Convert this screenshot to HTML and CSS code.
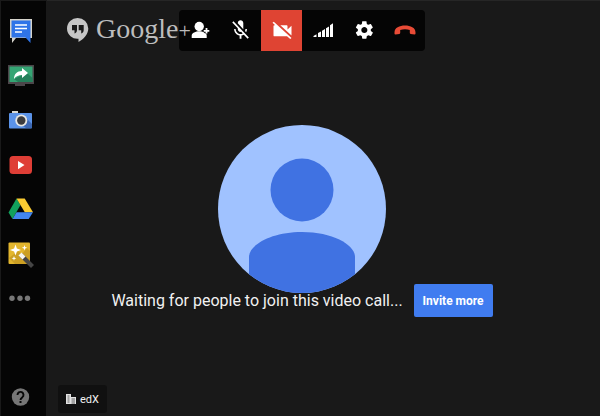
FILE: index.html
```html
<!DOCTYPE html>
<html lang="en">
<head>
<meta charset="utf-8">
<title>Google+ Hangouts</title>
<link rel="stylesheet" href="styles.css">
</head>
<body>
<nav class="sidebar" aria-label="Apps">
  <button class="app" aria-label="Chat"><svg viewBox="0 0 30 30">
    <path d="M4 4h22v19H10l-4 5v-5H4z" fill="#d5d3cb"/>
    <path d="M5.500 5.500h19V28l-5-5.500h-14z" fill="#2f74e8"/>
    <path d="M9 10h12M9 13.500h12M9 17h7" stroke="#fff" stroke-width="1.700"/>
  </svg></button>
  <button class="app" aria-label="Screenshare"><svg viewBox="0 0 30 30">
    <path d="M2 5h26v19h-9v2H9v-2H2z" fill="#4b4549"/>
    <path d="M3.500 6.500h23v15.500h-23z" fill="#35a574"/>
    <path d="M21 13l5.500 5v4H12l-4-3z" fill="#24805a"/>
    <path d="M8 19c0-5 3-8 8-8V8l6 5-6 5v-3c-3 0-6 1-8 4z" fill="#fff"/>
  </svg></button>
  <button class="app" aria-label="Capture"><svg viewBox="0 0 30 30">
    <rect x="6" y="6" width="6" height="3" fill="#d8d8d2"/>
    <rect x="3" y="8" width="23" height="15.500" rx="1" fill="#5b93e8"/>
    <path d="M19 12l7 7v4h-6l-7-5z" fill="#3c68b4"/>
    <circle cx="15.300" cy="15.500" r="6" fill="#e6e6e2"/>
    <circle cx="15.300" cy="15.500" r="4.200" fill="#3b3b3d"/>
  </svg></button>
  <button class="app" aria-label="YouTube"><svg viewBox="0 0 30 30">
    <rect x="3.500" y="6" width="22.500" height="18" rx="3.500" fill="#df3e36"/>
    <path d="M12 11l6.500 4-6.500 4.200z" fill="#fff"/>
  </svg></button>
  <button class="app" aria-label="Google Drive"><svg viewBox="0 0 30 30">
    <path d="M10.500 3.500L2.500 17.500 6.500 24l8-14z" fill="#12a05c"/>
    <path d="M10.500 3.500h8.200L27 17.300h-8.200z" fill="#fbcb32"/>
    <path d="M10.500 17.300H27L22.700 24H6.500z" fill="#4285ee"/>
  </svg></button>
  <button class="app" aria-label="Effects"><svg viewBox="0 0 30 30">
    <rect x="2.500" y="2.500" width="21.500" height="21.500" rx="1" fill="#e3b62e"/>
    <path d="M3 18l9-7 4 3 5-6 3 3v13H9z" fill="#b98c1c" opacity=".55"/>
    <path d="M9.500 4.500l1.400 4.100L15 10l-4.100 1.400-1.400 4.100-1.400-4.100L4 10l4.100-1.400zM18.500 5l.7 2 2 .7-2 .7-.7 2-.7-2-2-.7 2-.7zM8 16l.6 1.700 1.800.6-1.800.7L8 20.700 7.400 19l-1.800-.7 1.800-.6z" fill="#fff"/>
    <path d="M14.500 14.500L26.500 26.500" stroke="#454545" stroke-width="4.200"/>
    <path d="M14 14l4 4" stroke="#f7f5ee" stroke-width="4.200"/>
  </svg></button>
  <button class="app" aria-label="More apps"><svg viewBox="0 0 30 30" fill="#777">
    <circle cx="6" cy="13.300" r="2.700"/><circle cx="14" cy="13.300" r="2.700"/><circle cx="21.500" cy="13.300" r="2.700"/>
  </svg></button>
  <button class="app help" aria-label="Help"><svg viewBox="0 0 30 30">
    <circle cx="14.500" cy="15" r="8.700" fill="#767676"/>
    <path d="M11.500 13a3 3 0 1 1 4.800 2.300c-1.200.9-1.800 1.300-1.800 2.600" fill="none" stroke="#080808" stroke-width="1.900"/>
    <rect x="13.500" y="19" width="2" height="2" fill="#080808"/>
  </svg></button>
</nav>
<main class="stage">
  <header class="topbar">
    <div class="toolbar">
      <button class="tool" aria-label="Invite people"><svg viewBox="0 0 41 41" fill="#fff">
        <circle cx="20.200" cy="16.500" r="4.700"/>
        <path d="M12.700 28v-2.500c0-2.700 4-4.300 7.500-4.300s7.500 1.600 7.500 4.300V28z"/>
        <path d="M27.500 18.300v5M25 20.800h5" stroke="#050505" stroke-width="3.600"/>
        <path d="M27.500 18v5.600M24.700 20.800h5.600" stroke="#fff" stroke-width="1.800"/>
      </svg></button>
      <button class="tool" aria-label="Unmute microphone"><svg viewBox="0 0 41 41" fill="#fff">
        <path transform="translate(9.500 8.200) scale(.92 .98)" d="M19 11h-1.700c0 .74-.16 1.430-.43 2.050l1.230 1.230c.56-.98.9-2.090.9-3.280zm-4.020.17c0-.06.02-.11.02-.17V5c0-1.660-1.340-3-3-3S9 3.340 9 5v.18l5.980 5.990zM4.270 3L3 4.270l6.010 6.010V11c0 1.660 1.330 3 2.990 3 .22 0 .44-.03.65-.08l1.660 1.660c-.71.33-1.500.52-2.310.52-2.760 0-5.300-2.100-5.300-5.100H5c0 3.410 2.720 6.230 6 6.720V21h2v-3.280c.91-.13 1.770-.45 2.540-.9L19.730 21 21 19.730 4.270 3z"/>
      </svg></button>
      <button class="tool tool-off" aria-label="Turn camera on"><svg viewBox="0 0 41 41" fill="#fff">
        <path transform="translate(9.500 9.800) scale(1 .92)" d="M21 6.500l-4 4V7c0-.55-.45-1-1-1H9.820L21 17.180V6.500zM3.270 2L2 3.270 4.730 6H4c-.55 0-1 .45-1 1v10c0 .55.45 1 1 1h12c.21 0 .39-.08.54-.18L19.730 21 21 19.730 3.270 2z"/>
      </svg></button>
      <button class="tool" aria-label="Connection quality"><svg viewBox="0 0 41 41" fill="#fff">
        <path d="M11.500 27v-1l3-1.800V27zM16 27v-4l3-1.600V27zM20 27v-6.300l3-1.700v8zM24 27v-8.700l3-1.800V27zM28 27V15.200l3-2V27z"/>
      </svg></button>
      <button class="tool" aria-label="Settings"><svg viewBox="0 0 41 41" fill="#fff">
        <path transform="translate(10.900 9.600) scale(.87)" d="M19.430 12.980c.04-.32.07-.64.07-.98s-.03-.66-.07-.98l2.110-1.650c.19-.15.24-.42.12-.64l-2-3.460c-.12-.22-.39-.3-.61-.22l-2.490 1c-.52-.4-1.080-.73-1.690-.98l-.38-2.650C14.460 2.180 14.250 2 14 2h-4c-.25 0-.46.18-.49.42l-.38 2.650c-.61.25-1.170.59-1.690.98l-2.490-1c-.23-.09-.49 0-.61.22l-2 3.460c-.13.22-.07.49.12.64l2.110 1.650c-.04.32-.07.65-.07.98s.03.66.07.98l-2.110 1.650c-.19.15-.24.42-.12.64l2 3.460c.12.22.39.3.61.22l2.490-1c.52.4 1.080.73 1.690.98l.38 2.650c.03.24.24.42.49.42h4c.25 0 .46-.18.49-.42l.38-2.650c.61-.25 1.170-.59 1.690-.98l2.490 1c.23.09.49 0 .61-.22l2-3.460c.12-.22.07-.49-.12-.64l-2.110-1.650zM12 15.500c-1.930 0-3.500-1.570-3.500-3.500s1.570-3.500 3.500-3.500 3.500 1.570 3.500 3.500-1.570 3.500-3.500 3.500z"/>
      </svg></button>
      <button class="tool" aria-label="Leave call"><svg viewBox="0 0 41 41" fill="#e84b36">
        <path d="M10.500 22.500c0-5 5-7 10.500-7s10.500 2 10.500 7v1.300c0 .5-.4.800-.9.800l-4-.6c-.5-.1-.8-.4-.8-.9v-3c-3-1-6.600-1-9.600 0v3c0 .5-.3.8-.8.900l-4 .6c-.5 0-.9-.3-.9-.8z"/>
      </svg></button>
    </div>
    <div class="brand">
      <svg class="brand-mark" viewBox="0 0 22 24">
        <path d="M10.700 0a10.600 10.600 0 0 1 10.600 10.500c0 5.700-4.500 10.500-9.800 13.500v-3.300A10.400 10.400 0 0 1 0 10.500 10.600 10.600 0 0 1 10.700 0z" fill="#c6c6c6"/>
        <path d="M5 7h5v5c0 1.700-.9 3-2.500 3.500v-3.300H5zM11.700 7h5v5c0 1.700-.9 3-2.500 3.500v-3.300h-2.500z" fill="#191919"/>
      </svg>
      <span class="brand-name">Google<span class="brand-plus">+</span></span>
    </div>
  </header>
  <svg class="avatar" viewBox="0 0 168 168" role="img" aria-label="Profile picture">
    <defs><clipPath id="disc"><circle cx="84" cy="84" r="84"/></clipPath></defs>
    <g clip-path="url(#disc)">
      <path d="M0 0h168v168H0z" fill="#a0c2ff"/>
      <circle cx="84" cy="65" r="31.500" fill="#4072e2"/>
      <path d="M31 168v-36c0-12 22-25 53-25s53 13 53 25v36z" fill="#4072e2"/>
    </g>
  </svg>
  <div class="status">
    <p class="message">Waiting for people to join this video call...</p>
    <button class="invite">Invite more</button>
  </div>
  <div class="org">
    <svg class="org-icon" viewBox="0 0 10 10">
      <path d="M0 0h5v3h5v7H0z" fill="#e2e2e2"/>
      <path d="M1.500 2h2M1.500 4h2M1.500 6h2M1.500 8h2M5.500 5h3.500M5.500 7h3.500M5.500 9h3.500" stroke="#444" stroke-width=".8"/>
    </svg>
    <span>edX</span>
  </div>
</main>
</body>
</html>
```
FILE: styles.css
```css
* {
  box-sizing: border-box;
}

body {
  margin: 0;
  min-height: 100vh;
  display: flex;
  background: #191919;
  color: #f1f1f1;
  font-family: Roboto, "Liberation Sans", sans-serif;
}

button {
  border: 0;
  padding: 0;
  background: none;
  color: inherit;
  font-family: inherit;
  cursor: pointer;
}

svg {
  display: block;
}

.sidebar {
  flex: none;
  display: flex;
  flex-direction: column;
  gap: 15px;
  padding: 14px 10px 4px 5px;
  border: 1px solid #191919;
  border-bottom: 0;
  background: #050505;
}

.app {
  width: 30px;
  height: 30px;
}

.help {
  margin-top: auto;
}

.stage {
  position: relative;
  flex: 1;
  display: flex;
  flex-direction: column;
  align-items: center;
  padding: 9px 43px 3px 0;
  border-top: 1px solid #262626;
}

.toolbar {
  display: flex;
  border-radius: 4px;
  background: #050505;
}

.tool {
  width: 41px;
  height: 41px;
}

.tool-off {
  background: #df4433;
}

.brand {
  position: absolute;
  top: 17px;
  left: 20px;
  display: flex;
  align-items: flex-start;
  gap: 7px;
  color: #bdbdbd;
}

.brand-mark {
  width: 22px;
  height: 24px;
}

.brand-name {
  font: 28px/22px "Liberation Serif", serif;
}

.brand-plus {
  font-size: 22px;
}

.avatar {
  width: 168px;
  height: 168px;
  margin-top: 74px;
}

.status {
  position: relative;
  display: flex;
  align-items: center;
  gap: 11px;
  margin-top: -9px;
}

.message {
  margin: 0;
  font-size: 16px;
  line-height: 20px;
  text-shadow: 0 1px 1px #191919;
}

.invite {
  height: 33px;
  padding: 0 9px;
  border-radius: 2px;
  background: #407cf0;
  color: #fff;
  font-size: 12px;
  font-weight: 700;
}

.org {
  align-self: flex-start;
  display: flex;
  align-items: center;
  gap: 4px;
  height: 28px;
  margin: auto 0 0 11px;
  padding: 0 8px;
  border-radius: 3px;
  background: #101010;
  font-size: 11px;
}

.org-icon {
  width: 10px;
  height: 10px;
}
```
